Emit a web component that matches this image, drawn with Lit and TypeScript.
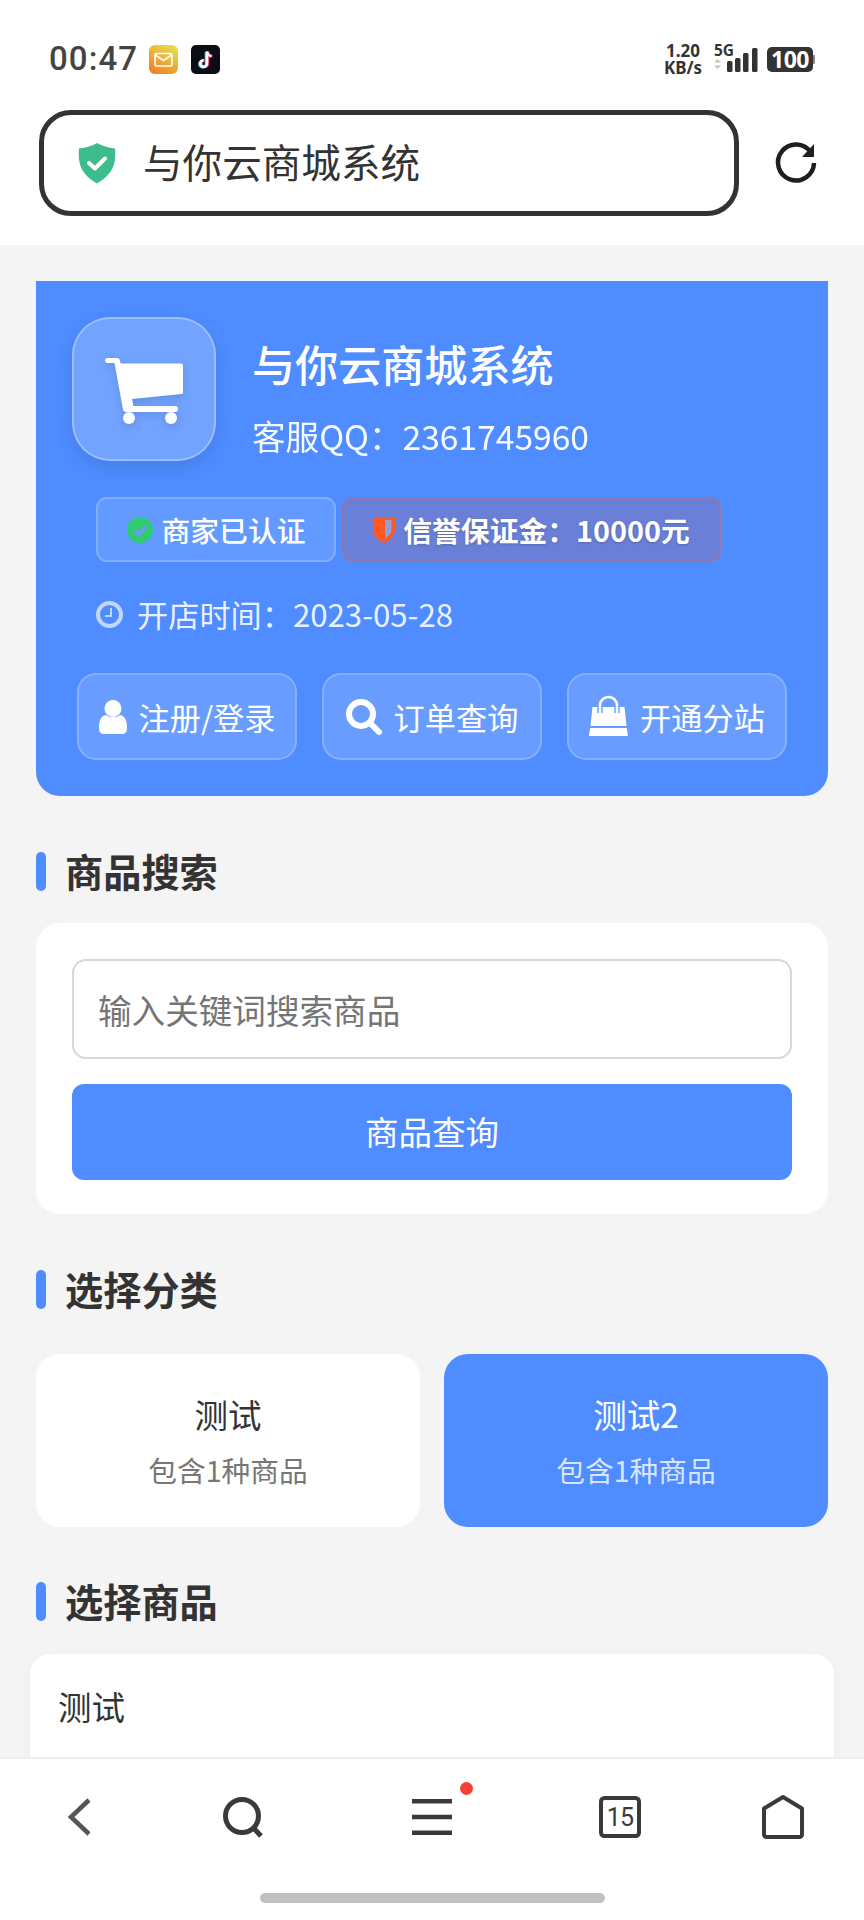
import { LitElement, html, css } from "lit";
import { customElement } from "lit/decorators.js";

@customElement("app-root")
export class AppRoot extends LitElement {
  static styles = css`
    :host { display: block; width: 864px; height: 1920px; overflow: hidden; background: #f4f4f4; font-family: "Noto Sans CJK SC", "Noto Sans", sans-serif; color: #333; }
    * { box-sizing: border-box; }
    svg { display: block; flex: none; overflow: visible; }
    .frame { height: 1920px; display: flex; flex-direction: column; }
    .top { height: 245px; flex: none; background: #fff; }
    .status { height: 110px; padding: 44px 49px 0; display: flex; align-items: flex-start; justify-content: space-between; }
    .status-left { display: flex; align-items: center; height: 30px; }
    .clock { font: 500 33px/30px Roboto, sans-serif; letter-spacing: 1.1px; color: #444; width: 100px; white-space: nowrap; }
    .tiktok { margin-left: 13px; }
    .status-right { display: flex; align-items: center; height: 30px; }
    .speed { font: 700 17px/17px "Noto Sans", sans-serif; text-align: center; color: #333; margin-right: 12px; width: 38px; white-space: nowrap; display: flex; flex-direction: column; align-items: center; }
    .net { position: relative; width: 44px; height: 30px; margin-right: 9px; }
    .net b { position: absolute; left: 0; top: -3px; font: 700 15.5px/18px "Noto Sans", sans-serif; color: #333; }
    .battery { position: relative; width: 48px; height: 26px; display: flex; align-items: center; }
    .battery-body { width: 46px; height: 25px; border-radius: 5px; background: #333; color: #fff; display: flex; align-items: center; justify-content: center; font: 700 23px/25px "Noto Sans", sans-serif; letter-spacing: -.5px; }
    .battery i { display: block; width: 2px; height: 9px; background: #888; border-radius: 0 1px 1px 0; }
    .address-row { display: flex; align-items: center; padding-left: 39px; }
    .address { width: 700px; height: 106px; border: 5px solid #333; border-radius: 32px; display: flex; align-items: center; padding-left: 34px; gap: 27px; font-size: 39.6px; line-height: 50px; }
    .address span { margin-bottom: 4px; }
    .reload { margin-left: 36px; }
    .content { flex: 1; min-height: 0; overflow: hidden; padding: 36px 36px 0; }
    .hero { height: 515px; background: #4e8cff; border-radius: 0 0 24px 24px; padding: 36px 36px 0; color: #fff; }
    .shop { display: flex; align-items: center; gap: 36px; }
    .logo { width: 144px; height: 144px; border-radius: 38px; background: rgba(255,255,255,.2); border: 2px solid rgba(255,255,255,.3); box-shadow: 0 6px 18px rgba(0,0,0,.1); display: flex; align-items: center; justify-content: center; padding-top: 3px; }
    .cart { filter: drop-shadow(0 3px 4px rgba(0,0,0,.12)); }
    .shop-text { padding-top: 15px; }
    .shop-name { font-size: 43.1px; line-height: 60px; font-weight: 500; }
    .shop-qq { font-size: 33.6px; line-height: 48px; margin-top: 19px; opacity: .95; }
    .badges { display: flex; gap: 6px; margin: 36px 0 0 24px; }
    .badge { height: 65px; border-radius: 11px; display: flex; align-items: center; justify-content: center; font-size: 28.8px; line-height: 40px; }
    .verified { width: 240px; background: rgba(255,255,255,.12); border: 2px solid rgba(255,255,255,.2); gap: 9px; font-weight: 500; }
    .deposit { width: 379px; background: #6a80d8; border: 2px solid rgba(255,87,34,.25); font-weight: 700; gap: 8px; text-shadow: 0 1px 3px rgba(0,0,0,.2); }
    .opened { display: flex; align-items: center; gap: 14px; margin: 30px 0 0 24px; height: 44px; font-size: 31.2px; line-height: 44px; color: rgba(255,255,255,.9); }
    .actions { display: flex; gap: 25px; margin: 37px 0 0 5px; }
    .action { width: 220px; height: 87px; border-radius: 19px; background: rgba(255,255,255,.15); border: 2px solid rgba(255,255,255,.2); display: flex; align-items: center; justify-content: center; gap: 12px; font-size: 31.2px; line-height: 44px; }
    .heading { display: flex; align-items: center; gap: 19px; font-size: 38.2px; line-height: 52px; font-weight: 700; color: #333; }
    .heading i { display: block; width: 10px; height: 39px; border-radius: 5px; background: #4e8cff; }
    .h1 { margin-top: 49px; }
    .search { height: 291px; margin-top: 26px; background: #fff; border-radius: 24px; padding: 36px; }
    .input { height: 100px; border: 2px solid #d8d8d8; border-radius: 14px; display: flex; align-items: center; padding: 2px 0 0 24px; font-size: 33.6px; line-height: 46px; color: #757575; }
    .submit { height: 96px; margin-top: 25px; border-radius: 12px; background: #4e8cff; color: #fff; display: flex; align-items: center; justify-content: center; padding-bottom: 2px; font-size: 33.5px; line-height: 46px; }
    .h2 { margin-top: 49px; }
    .cats { display: grid; grid-template-columns: 384px 384px; gap: 24px; margin-top: 39px; }
    .cat { height: 173px; border-radius: 24px; background: #fff; display: flex; flex-direction: column; align-items: center; justify-content: center; }
    .cat.on { background: #4e8cff; color: #fff; }
    .cat b { font-weight: 400; font-size: 33.5px; line-height: 46px; }
    .cat span { font-size: 28.7px; line-height: 40px; margin-top: 13px; color: #777; }
    .cat.on span { color: rgba(255,255,255,.8); }
    .h3 { margin-top: 48px; }
    .product { margin: 27px -6px 0; height: 200px; border-radius: 20px; background: #fff; box-shadow: 0 2px 10px rgba(0,0,0,.05); padding: 29px 28px; font-size: 33.5px; line-height: 46px; color: #333; }
    .bottom { height: 163px; flex: none; background: #fff; border-top: 2px solid #eee; }
    .tabs { display: grid; grid-template-columns: 160px 166px 212px 164px 162px; height: 116px; align-items: center; justify-items: center; }
    .tab { position: relative; }
    .dot { position: absolute; width: 13px; height: 13px; border-radius: 50%; background: #f44336; left: 48px; top: -17px; }
    .pill { width: 345px; height: 10px; border-radius: 5px; background: #c1c1c1; margin: 18px auto 0; }
  `;

  render() {
    return html`<div class="frame">
      <div class="top">
        <div class="status">
          <div class="status-left">
            <span class="clock">00:47</span>
            <svg width="29" height="29" viewBox="0 0 29 29">
              <defs><linearGradient id="m" x1="0.8" y1="0" x2="0.2" y2="1"><stop offset="0" stop-color="#e3e04e"/><stop offset="1" stop-color="#f57e22"/></linearGradient></defs>
              <rect width="29" height="29" rx="6" fill="url(#m)"/>
              <rect x="6" y="8.500" width="17" height="12.500" rx="1.500" fill="none" stroke="#fff" stroke-width="1.600"/>
              <path d="M6.500 10l8 5.500 8-5.500" fill="none" stroke="#fff" stroke-width="1.600"/>
            </svg>
            <svg class="tiktok" width="29" height="29" viewBox="0 0 29 29">
              <rect width="29" height="29" rx="5" fill="#0c0c16"/>
              <path d="M16 6.500v12a3.300 3.300 0 1 1-3.300-3.300" fill="none" stroke="#3fe0e6" stroke-width="2.600" transform="translate(-1 .6)"/>
              <path d="M16 6.500c.3 2.800 2 4.300 4.500 4.500" fill="none" stroke="#3fe0e6" stroke-width="2.400" transform="translate(-1 .6)"/>
              <path d="M16 6.500v12a3.300 3.300 0 1 1-3.300-3.300" fill="none" stroke="#f0375a" stroke-width="2.600" transform="translate(1 .2)"/>
              <path d="M16 6.500c.3 2.800 2 4.300 4.500 4.500" fill="none" stroke="#f0375a" stroke-width="2.400" transform="translate(1 .2)"/>
              <path d="M16 6.500v12a3.300 3.300 0 1 1-3.300-3.300" fill="none" stroke="#fff" stroke-width="2.500"/>
              <path d="M16 6.500c.3 2.800 2 4.300 4.500 4.500" fill="none" stroke="#fff" stroke-width="2.300"/>
            </svg>
          </div>
          <div class="status-right">
            <div class="speed"><span>1.20</span><span>KB/s</span></div>
            <div class="net">
              <b>5G</b>
              <svg width="44" height="30" viewBox="0 0 44 30">
                <path d="M0 18.500l3.500-3.500 3.500 3.500zM0 21.500l3.500 3.500 3.500-3.500z" fill="#c4c4c4"/>
                <rect x="13" y="17" width="5.500" height="11" rx="1.500" fill="#333"/>
                <rect x="21" y="14" width="5.500" height="14" rx="1.500" fill="#333"/>
                <rect x="29" y="9" width="5.500" height="19" rx="1.500" fill="#333"/>
                <rect x="38" y="4" width="5.500" height="24" rx="1.500" fill="#333"/>
              </svg>
            </div>
            <div class="battery"><div class="battery-body">100</div><i></i></div>
          </div>
        </div>
        <div class="address-row">
          <div class="address">
            <svg width="38" height="41" viewBox="0 0 38 41">
              <path d="M19 0c5 3 11 4.500 18 5.500 1 12 0 25-18 35C1 30.500 0 17.500 1 5.500 8 4.500 14 3 19 0z" fill="#3dbd8c"/>
              <path d="M11 20l6 5.500 10-10" fill="none" stroke="#fff" stroke-width="4" stroke-linecap="round" stroke-linejoin="round"/>
            </svg>
            <span>与你云商城系统</span>
          </div>
          <svg class="reload" width="42" height="42" viewBox="0 0 42 42">
            <path d="M36 10.500A18 18 0 1 0 39 21" fill="none" stroke="#1f1f1f" stroke-width="4.500"/>
            <path d="M39 2v13H27z" fill="#1f1f1f"/>
          </svg>
        </div>
      </div>

      <div class="content">
        <section class="hero">
          <div class="shop">
            <div class="logo">
              <svg class="cart" width="78" height="66" viewBox="0 0 78 66">
                <path d="M2.500 0h9.500a3 3 0 0 1 2.800 2l.8 3.500H76.500a1.500 1.500 0 0 1 1.500 1.500v27.500a1.500 1.500 0 0 1-1.500 1.500L27 41l1.400 7H70a3 3 0 0 1 0 6H21a3 3 0 0 1-3-2.500L9.500 5H2.500a2.500 2.500 0 0 1 0-5z" fill="#fff"/>
                <circle cx="24" cy="60" r="6" fill="#fff"/><circle cx="66" cy="60" r="6" fill="#fff"/>
              </svg>
            </div>
            <div class="shop-text">
              <div class="shop-name">与你云商城系统</div>
              <div class="shop-qq">客服QQ：2361745960</div>
            </div>
          </div>
          <div class="badges">
            <div class="badge verified">
              <svg width="26" height="26" viewBox="0 0 26 26"><circle cx="13" cy="13" r="13" fill="#2ecc71"/><path d="M7 13.500l4.500 4 8-8" fill="none" stroke="#6a9cf0" stroke-width="3.500"/></svg>
              <span>商家已认证</span>
            </div>
            <div class="badge deposit">
              <svg width="22" height="26" viewBox="0 0 22 26"><path d="M2 0h18a2 2 0 0 1 2 2v10c0 6-4 11-11 14C4 23 0 18 0 12V2a2 2 0 0 1 2-2z" fill="#ff5722"/><path d="M12 3h6.500v9c0 4-2.500 7-6.500 9.500z" fill="#8fa0dc"/></svg>
              <span>信誉保证金：10000元</span>
            </div>
          </div>
          <div class="opened">
            <svg width="27" height="27" viewBox="0 0 27 27"><circle cx="13.500" cy="13.500" r="11.500" fill="none" stroke="#c3d6fb" stroke-width="4"/><path d="M15 7v8H9" fill="none" stroke="#c3d6fb" stroke-width="2"/></svg>
            <span>开店时间：2023-05-28</span>
          </div>
          <div class="actions">
            <div class="action">
              <svg width="28" height="34" viewBox="0 0 28 34"><circle cx="14" cy="8.500" r="8.500" fill="#fff"/><path d="M0 28c0-8 2-12 7-13 4 3 10 3 14 0 5 1 7 5 7 13 0 4-2 6-5 6H5c-3 0-5-2-5-6z" fill="#fff"/></svg>
              <span>注册/登录</span>
            </div>
            <div class="action">
              <svg width="36" height="36" viewBox="0 0 36 36"><circle cx="15" cy="15" r="12" fill="none" stroke="#fff" stroke-width="6"/><path d="M24 24l9 9" stroke="#fff" stroke-width="6" stroke-linecap="round"/></svg>
              <span>订单查询</span>
            </div>
            <div class="action">
              <svg width="39" height="39" viewBox="0 0 39 39">
                <path d="M3.500 10h32l2 19H1.500z" fill="#fff"/><path d="M1.200 31h36.600L39 39H0z" fill="#fff"/>
                <path d="M11 16V8.500a8 8 0 0 1 17 0V16" fill="none" stroke="#6e9fff" stroke-width="5.500"/>
                <path d="M11 16V8.500a8 8 0 0 1 17 0V16" fill="none" stroke="#fff" stroke-width="2.500"/>
              </svg>
              <span>开通分站</span>
            </div>
          </div>
        </section>

        <div class="heading h1"><i></i><span>商品搜索</span></div>
        <section class="search">
          <div class="input">输入关键词搜索商品</div>
          <div class="submit">商品查询</div>
        </section>

        <div class="heading h2"><i></i><span>选择分类</span></div>
        <section class="cats">
          <div class="cat"><b>测试</b><span>包含1种商品</span></div>
          <div class="cat on"><b>测试2</b><span>包含1种商品</span></div>
        </section>

        <div class="heading h3"><i></i><span>选择商品</span></div>
        <section class="product">测试</section>
      </div>

      <div class="bottom">
        <div class="tabs">
          <div class="tab">
            <svg width="24" height="38" viewBox="0 0 24 38"><path d="M21 2L3 19l18 17" fill="none" stroke="#555" stroke-width="4.500"/></svg>
          </div>
          <div class="tab">
            <svg width="40" height="40" viewBox="0 0 40 40"><circle cx="19" cy="19" r="16.500" fill="none" stroke="#3a3a3a" stroke-width="5"/><path d="M30 30.500l8 8.500" stroke="#3a3a3a" stroke-width="5"/></svg>
          </div>
          <div class="tab">
            <svg width="40" height="36" viewBox="0 0 40 36"><path d="M0 2.250h40M0 18h40M0 33.750h40" stroke="#3a3a3a" stroke-width="4.500"/></svg>
            <i class="dot"></i>
          </div>
          <div class="tab">
            <svg width="42" height="42" viewBox="0 0 42 42"><rect x="2" y="2" width="38" height="38" rx="3.500" fill="none" stroke="#3a3a3a" stroke-width="4"/><text x="21" y="30" text-anchor="middle" font-family="Roboto, sans-serif" font-size="25" letter-spacing="-.8" fill="#3a3a3a">15</text></svg>
          </div>
          <div class="tab">
            <svg width="42" height="44" viewBox="0 0 42 44"><path d="M21 2L40 13.500V39.500a2.500 2.500 0 0 1-2.500 2.500h-33A2.500 2.500 0 0 1 2 39.500V13.500z" fill="none" stroke="#3a3a3a" stroke-width="4" stroke-linejoin="round"/></svg>
          </div>
        </div>
        <div class="pill"></div>
      </div>
    </div>`;
  }
}
